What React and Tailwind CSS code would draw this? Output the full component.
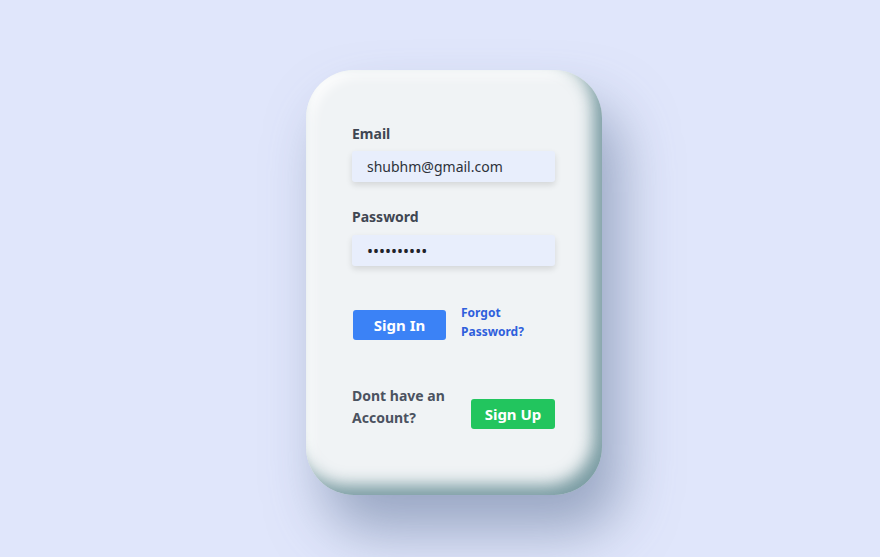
import React from 'react';

const App = () => {
  return (
    <div
      className="min-h-screen w-full bg-[#e0e6fb] flex justify-center pt-[70px]"
      style={{ fontFamily: '"Noto Sans", "Open Sans", sans-serif' }}
    >
      <div className="ml-[28px] w-[296px] h-[425px] rounded-[48px] bg-[#f0f3f5] px-[46px] pt-[54px] shadow-[inset_-9px_-10px_16px_rgba(60,110,120,0.65),inset_6px_6px_12px_rgba(255,255,255,0.9),18px_36px_55px_rgba(95,115,150,0.55)]">
        <form className="flex flex-col" onSubmit={(e) => e.preventDefault()}>
          <label className="text-[14px] font-bold text-[#3f4652] leading-5">Email</label>
          <input
            type="email"
            defaultValue="shubhm@gmail.com"
            className="mt-[7px] w-[203px] h-[31px] bg-[#e8eefc] rounded-[3px] px-[15px] text-[14px] text-[#2d323a] outline-none shadow-[0_3px_6px_rgba(0,0,0,0.12)]"
          />
          <label className="mt-[25px] text-[14px] font-bold text-[#3f4652] leading-5">Password</label>
          <input
            type="password"
            defaultValue="1234567890"
            className="mt-[8px] w-[203px] h-[31px] bg-[#e8eefc] rounded-[3px] px-[15px] text-[16px] text-[#1f2329] outline-none shadow-[0_3px_6px_rgba(0,0,0,0.12)]"
          />

          <div className="mt-[37px] flex items-start">
            <button className="mt-[7px] ml-px w-[93px] h-[30px] bg-[#3b82f6] rounded-[3px] text-white text-[15px] font-bold">
              Sign In
            </button>
            <a href="#" className="ml-[15px] text-[12px] font-bold leading-[19px] text-[#2f5fdc]">
              Forgot<br />Password?
            </a>
          </div>

          <div className="mt-[44px] flex items-center justify-between w-[203px]">
            <p className="text-[14px] font-bold leading-[22px] text-[#4b5260]">
              Dont have an<br />Account?
            </p>
            <button className="mt-[14px] w-[84px] h-[30px] bg-[#22c55e] rounded-[3px] text-white text-[15px] font-bold">
              Sign Up
            </button>
          </div>
        </form>
      </div>
    </div>
  );
};

export default App;
